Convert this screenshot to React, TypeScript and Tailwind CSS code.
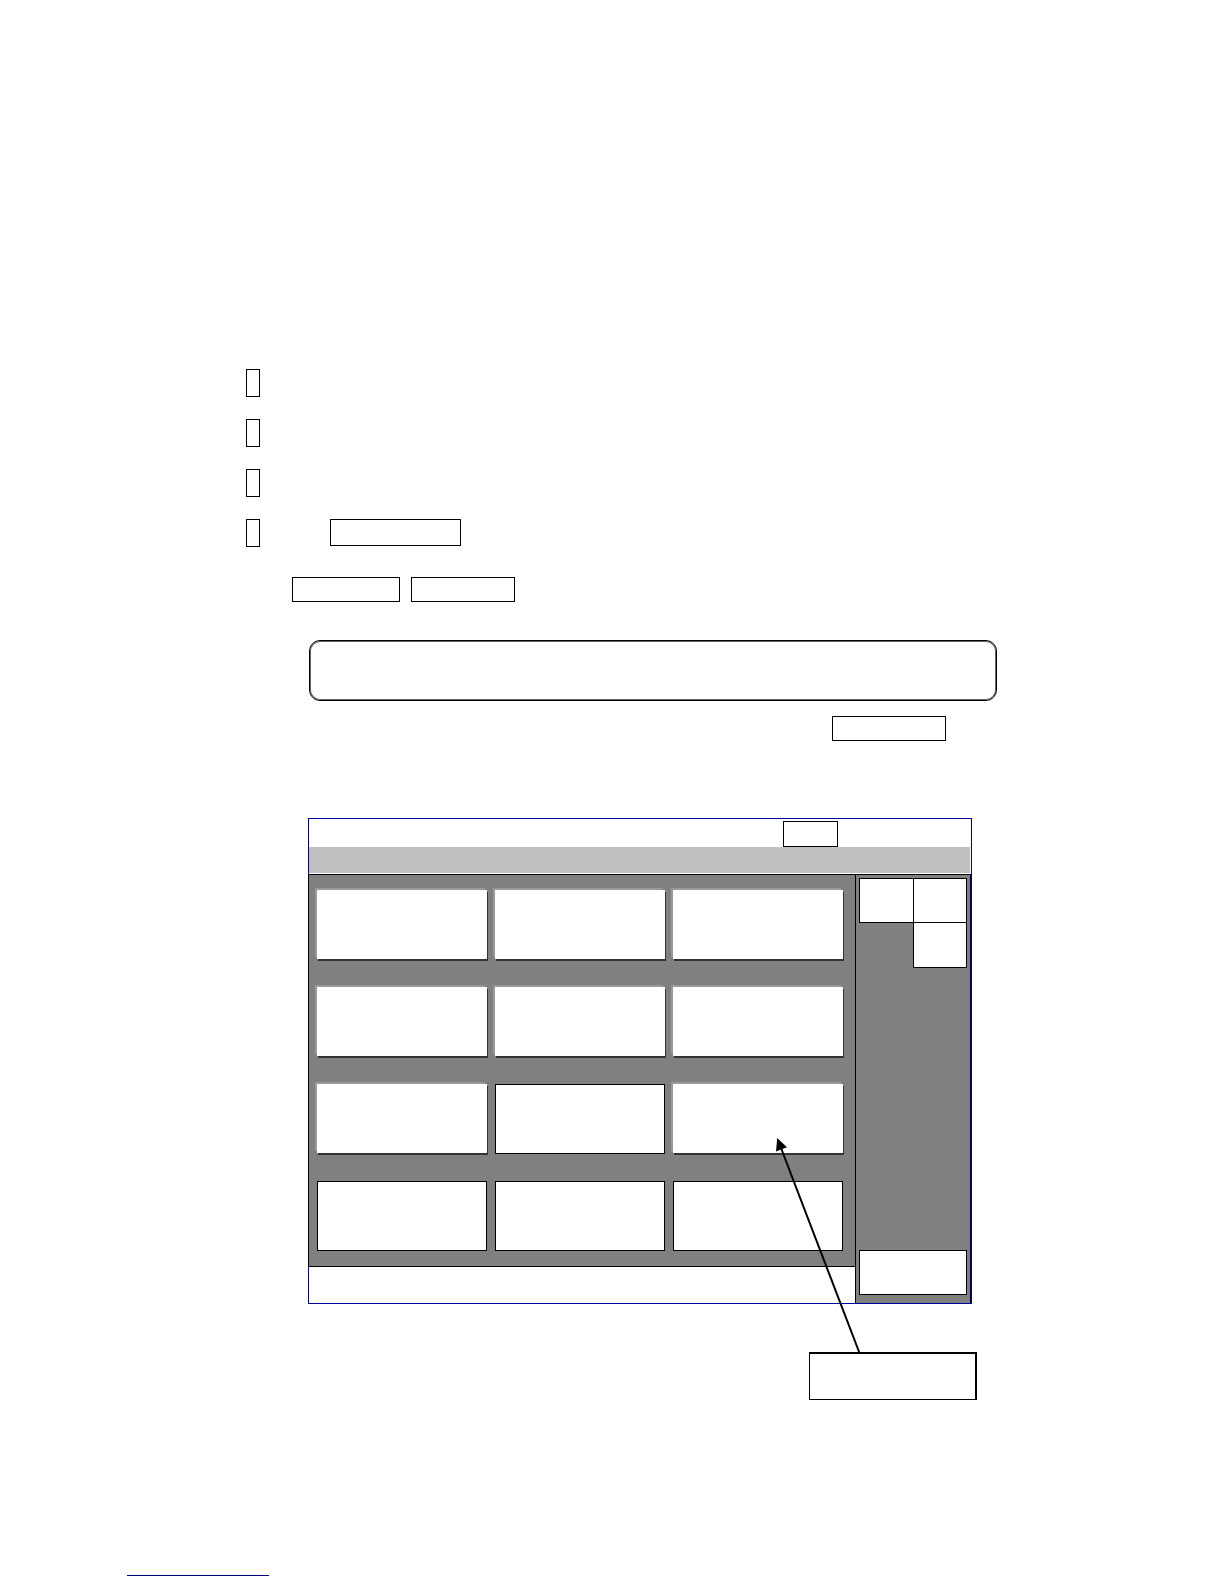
type Cell = { id: string; raised: boolean };

const cells: Cell[] = [
  { id: "1", raised: true },
  { id: "2", raised: true },
  { id: "3", raised: true },
  { id: "4", raised: true },
  { id: "5", raised: true },
  { id: "6", raised: true },
  { id: "7", raised: true },
  { id: "8", raised: false },
  { id: "9", raised: true },
  { id: "10", raised: false },
  { id: "11", raised: false },
  { id: "12", raised: false },
];

function Steps() {
  return (
    <ol className="flex flex-col gap-[22px] pl-[246px]">
      <li className="flex">
        <span className="h-7 w-[14px] border border-black" />
      </li>
      <li className="flex">
        <span className="h-7 w-[14px] border border-black" />
      </li>
      <li className="flex">
        <span className="h-7 w-[14px] border border-black" />
      </li>
      <li className="flex gap-[70px]">
        <span className="h-7 w-[14px] border border-black" />
        <button type="button" aria-label="Key" className="h-[27px] w-[131px] border border-black" />
      </li>
    </ol>
  );
}

function KeyGrid() {
  return (
    <div className="grid grid-cols-3 gap-x-2 gap-y-[27px] border border-black bg-[#808080] pt-[15px] pr-3 pb-[15px] pl-2">
      {cells.map((cell) => (
        <button
          key={cell.id}
          type="button"
          aria-label={`Cell ${cell.id}`}
          className={
            cell.raised
              ? "mb-px h-[69px] bg-white shadow-[-2px_-2px_0_#999999,1px_2px_0_#333333]"
              : "h-[70px] border border-black bg-white"
          }
        />
      ))}
    </div>
  );
}

function SidePanel() {
  return (
    <div className="flex w-[115px] shrink-0 flex-col border-t border-r border-black bg-[#808080] px-[3px] pt-[3px] pb-2">
      <div className="flex">
        <button type="button" aria-label="Side 1" className="h-[45px] flex-1 border border-r-0 border-black bg-white" />
        <button type="button" aria-label="Side 2" className="h-[45px] flex-1 border border-black bg-white" />
      </div>
      <div className="flex justify-end">
        <button type="button" aria-label="Side 3" className="h-[45px] w-1/2 border border-t-0 border-black bg-white" />
      </div>
      <button type="button" aria-label="Side 4" className="mt-auto h-[45px] w-full border border-black bg-white" />
    </div>
  );
}

function Screen() {
  return (
    <div className="w-full max-w-[664px] border border-[#0000a0] bg-white">
      <div className="flex h-7 items-end justify-end pr-[133px]">
        <button type="button" aria-label="Header" className="h-[26px] w-[55px] border border-black bg-white" />
      </div>
      <div className="mr-px mb-px h-[26px] bg-[#c0c0c0]" />
      <div className="flex">
        <div className="-ml-px flex flex-1 flex-col">
          <KeyGrid />
          <div className="ml-px h-9 border-r border-black bg-white" />
        </div>
        <SidePanel />
      </div>
    </div>
  );
}

function Callout() {
  return (
    <div className="relative mt-12 ml-[501px] h-12 w-[168px] border border-t-2 border-r-2 border-black bg-white">
      <svg
        className="pointer-events-none absolute bottom-full -left-[41px]"
        width="100"
        height="216"
        viewBox="0 0 100 216"
        aria-hidden="true"
      >
        <path d="M12 10L90.5 215" stroke="#000" strokeWidth="2" fill="none" />
        <path d="M8.2 0L18 9.3L7 13.5Z" fill="#000" />
      </svg>
    </div>
  );
}

export default function App() {
  return (
    <main className="flex min-h-screen flex-col bg-white pt-[369px] font-['Liberation_Sans',sans-serif]">
      <Steps />
      <div className="mt-[30px] flex gap-[11px] pl-[292px]">
        <button type="button" aria-label="Option 1" className="h-[25px] w-[108px] border border-black" />
        <button type="button" aria-label="Option 2" className="h-[25px] w-[104px] border border-black" />
      </div>
      <div className="mt-[38px] pl-[309px]">
        <div className="h-[61px] w-full max-w-[688px] rounded-[11px] border border-black shadow-[inset_0_0_0_1px_#666666]" />
      </div>
      <div className="mt-[15px] pl-[832px]">
        <button type="button" aria-label="Confirm" className="block h-[25px] w-[114px] border border-black" />
      </div>
      <figure className="mt-[77px] pl-[308px]">
        <Screen />
        <Callout />
      </figure>
      <footer className="mt-auto pb-2 pl-[127px]">
        <a href="#top" aria-label="Back to top" className="block h-4 w-[142px] border-b border-[#000080]" />
      </footer>
    </main>
  );
}
